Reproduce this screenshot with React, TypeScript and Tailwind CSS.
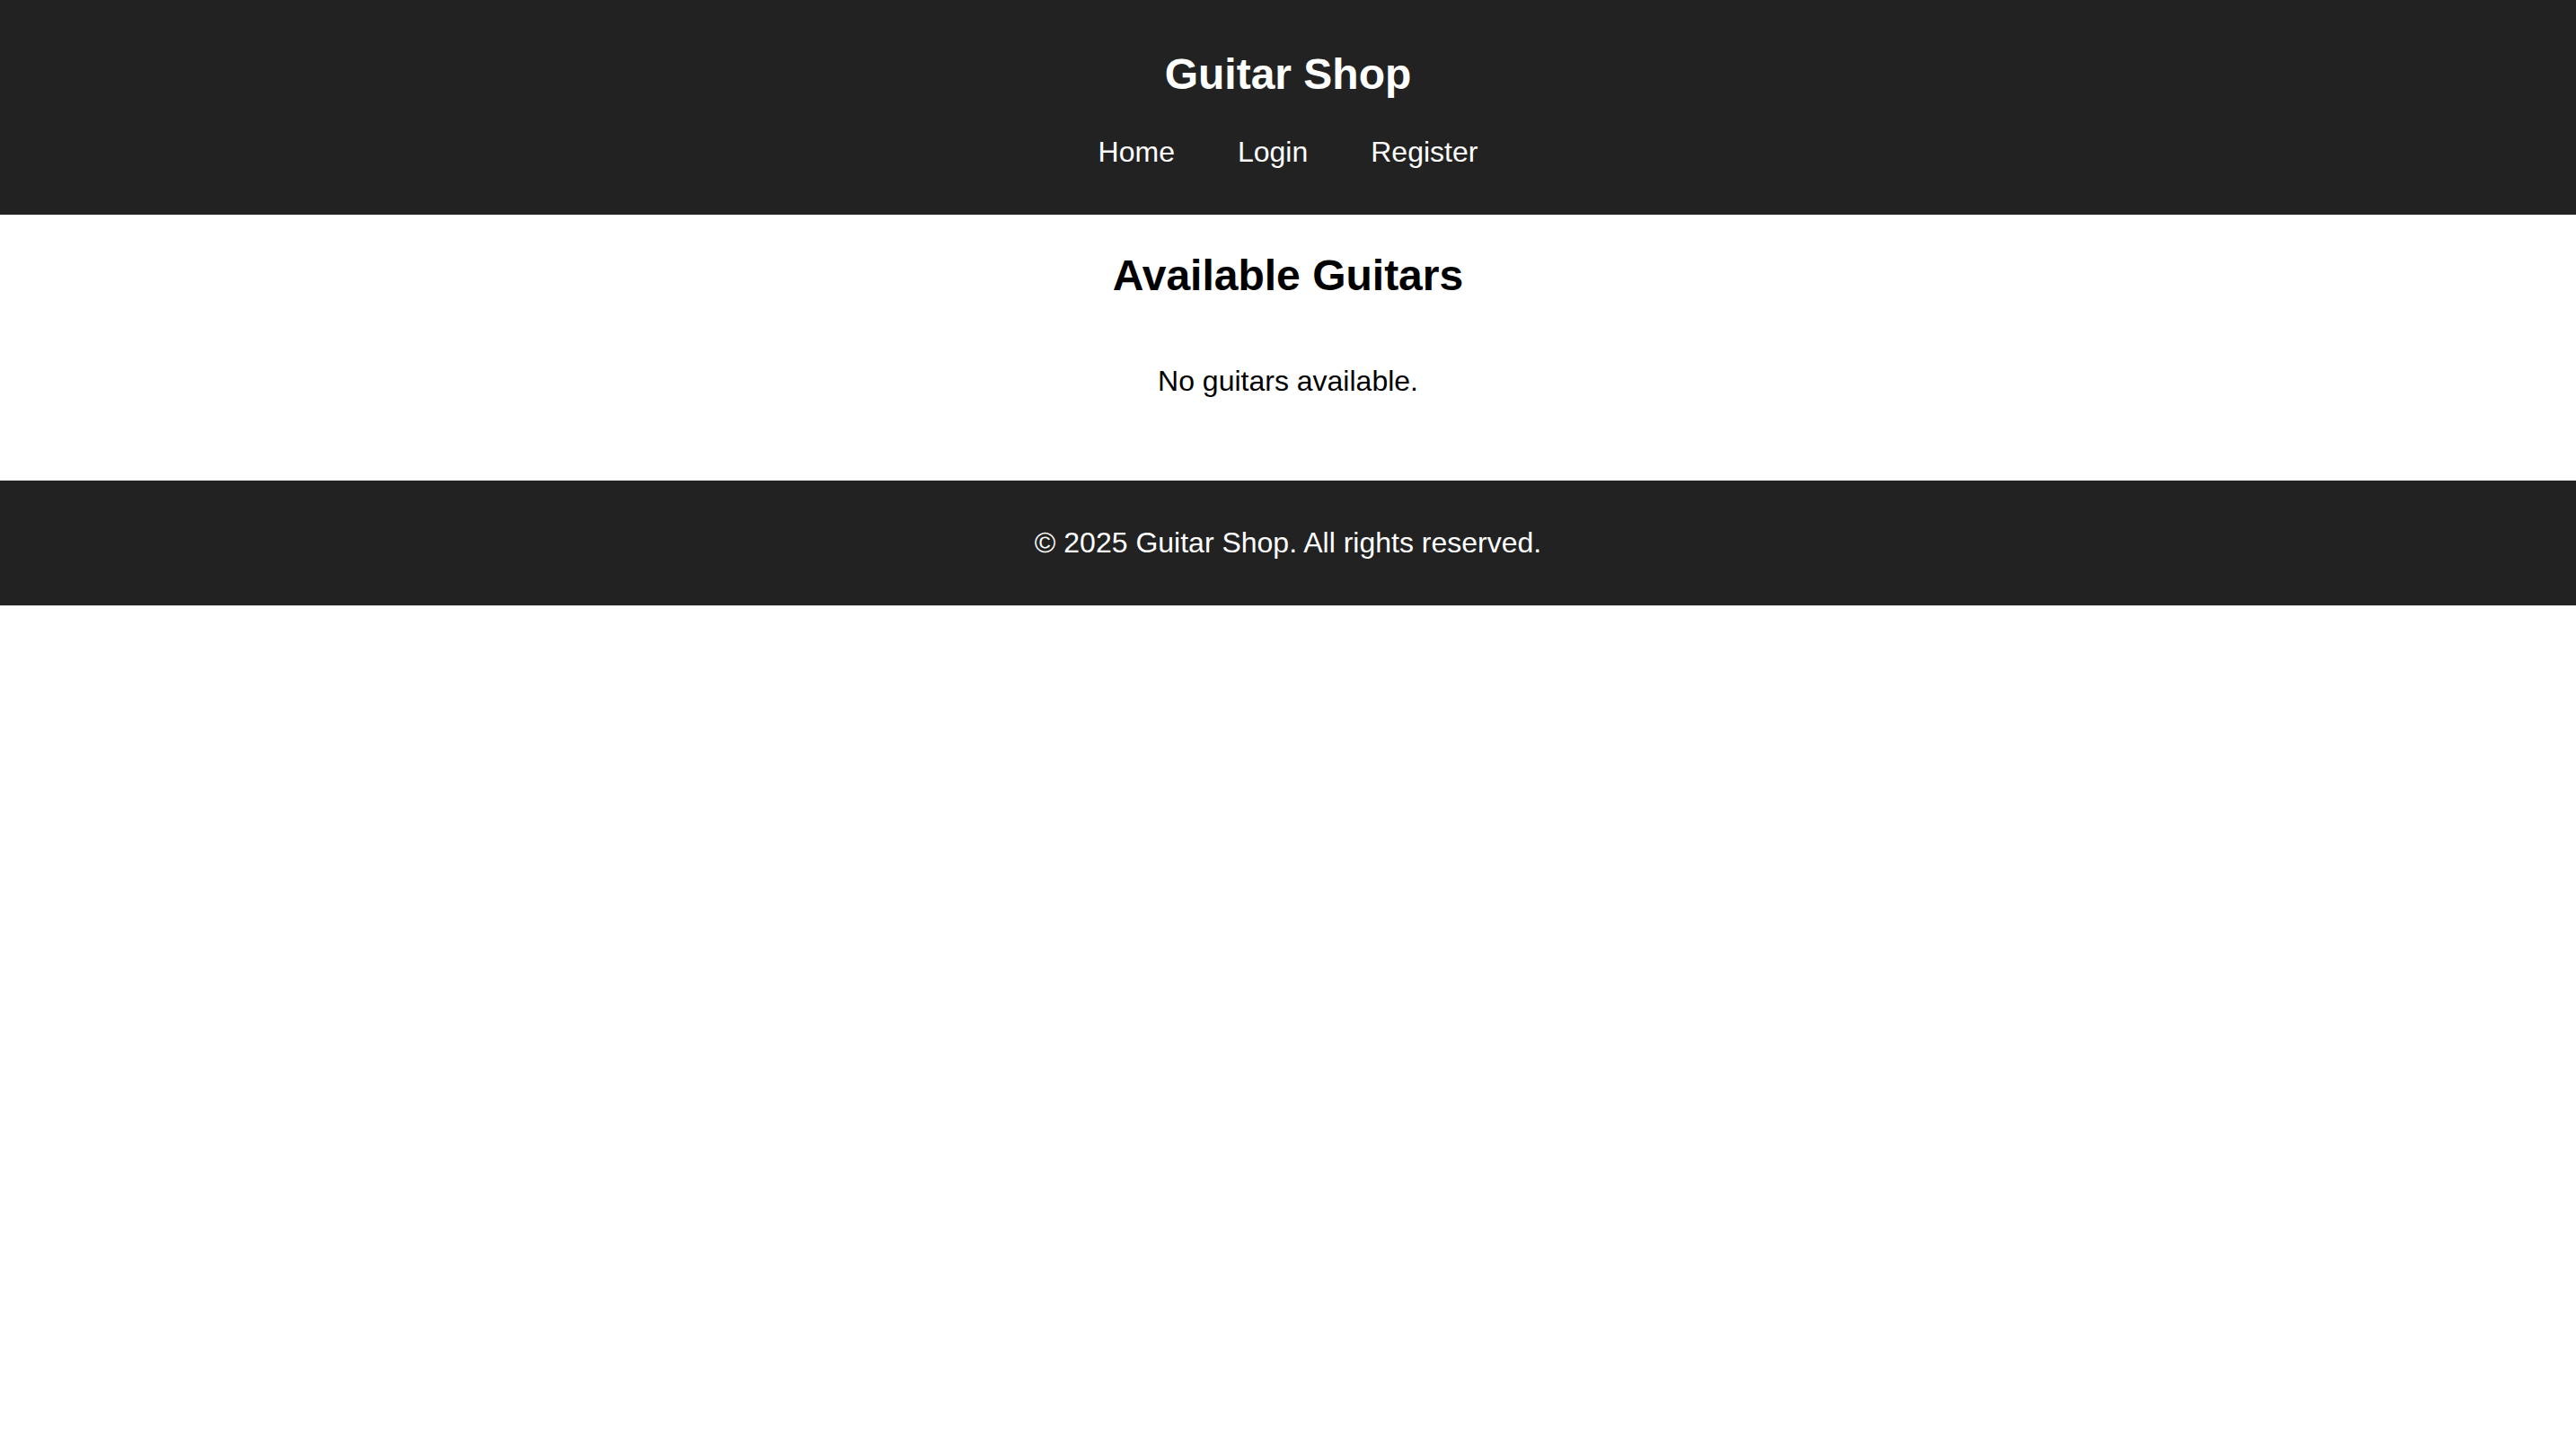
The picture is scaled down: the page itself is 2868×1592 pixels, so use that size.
import React from 'react';

const navLinks = ['Home', 'Login', 'Register'];

const App: React.FC = () => {
  return (
    <div className="min-h-screen bg-white text-black font-['Liberation_Sans',Arial,sans-serif]">
      {/* Header */}
      <header className="bg-[#222222] text-white pt-[55px] pb-[51px] text-center">
        <h1 className="text-[48px] font-bold leading-[55px]">Guitar Shop</h1>
        <nav className="mt-[41px]">
          <ul className="flex justify-center gap-[70px] text-[32px] leading-[37px]">
            {navLinks.map((link) => (
              <li key={link}>
                <a href="#" className="text-white">{link}</a>
              </li>
            ))}
          </ul>
        </nav>
      </header>

      {/* Guitar list */}
      <main className="text-center pt-[40px] pb-[92px]">
        <h2 className="text-[48px] font-bold leading-[55px]">Available Guitars</h2>
        <p className="mt-[72px] text-[32px] leading-[37px]">No guitars available.</p>
      </main>

      {/* Footer */}
      <footer className="bg-[#222222] text-white text-center pt-[51px] pb-[51px]">
        <p className="text-[32px] leading-[37px]">© 2025 Guitar Shop. All rights reserved.</p>
      </footer>
    </div>
  );
};

export default App;
